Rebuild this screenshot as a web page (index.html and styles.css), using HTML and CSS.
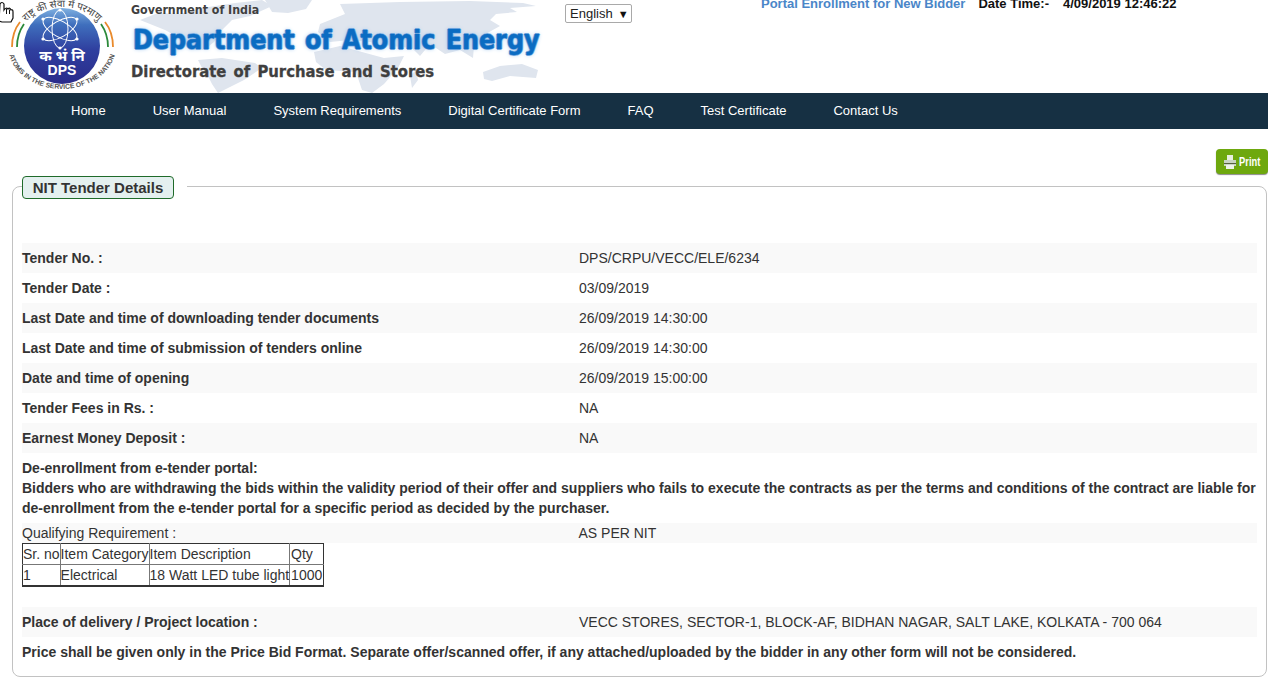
FILE: index.html
```html
<!DOCTYPE html>
<html lang="en">
<head>
<meta charset="utf-8">
<title>NIT Tender Details</title>
<link rel="stylesheet" href="styles.css">
</head>
<body>
<header class="masthead">
  <svg class="world" width="560" height="93" viewBox="0 0 560 93" aria-hidden="true">
    <g fill="#dfe5ee">
      <path d="M140 20 L158 13 L180 14 L202 8 L235 3 L262 0 L272 6 L250 16 L232 20 L222 30 L214 42 L204 50 L192 50 L180 38 L165 30 L150 24 Z"/>
      <path d="M265 0 L312 0 L306 9 L288 13 L272 12 Z"/>
      <path d="M198 60 L222 58 L255 63 L262 68 L244 80 L232 86 L218 93 L212 84 L208 76 L202 68 Z"/>
      <path d="M320 24 L345 14 L340 4 L400 2 L470 1 L523 3 L536 6 L510 8 L517 12 L496 14 L490 20 L500 26 L482 36 L474 46 L473 58 L460 50 L445 54 L430 44 L420 56 L412 48 L392 46 L370 42 L350 40 L330 42 L318 32 Z"/>
      <path d="M314 52 L340 46 L362 52 L384 58 L404 56 L398 68 L384 84 L372 93 L362 90 L356 72 L326 70 L316 62 Z"/>
      <path d="M483 72 L500 66 L522 64 L538 70 L536 78 L510 76 L492 81 L484 79 Z"/>
      <path d="M410 76 L416 70 L418 80 L412 88 Z"/>
    </g>
  </svg>
  <svg class="pointer" width="14" height="24" viewBox="0 0 14 24" aria-hidden="true">
    <path d="M-1 21 L0 4 Q2 1 4 4 L4 10 Q6 7 8 9 Q10 7 11 10 Q13 9 13 12 L13 18 L11 22 L2 22 Z" fill="#fff" stroke="#111" stroke-width="1.2"/>
    <path d="M6.500 9 V14 M9.500 9.500 V14" stroke="#111" stroke-width="1"/>
  </svg>
  <svg class="logo" width="124" height="93" viewBox="0 0 124 93" aria-hidden="true">
    <defs>
      <linearGradient id="disc" x1="0" y1="0" x2="0" y2="1">
        <stop offset="0" stop-color="#7fb0e0"/>
        <stop offset="0.22" stop-color="#3f6fbd"/>
        <stop offset="0.55" stop-color="#2f3f9f"/>
        <stop offset="1" stop-color="#2a2b8a"/>
      </linearGradient>
      <path id="arcTop" d="M16 46 A46 39 0 0 1 108 46"/>
      <path id="arcBottom" d="M8 46 A54 43 0 0 0 116 46"/>
    </defs>
    <circle cx="62" cy="46" r="38" fill="url(#disc)"/>
    <g fill="none" stroke="#fff" stroke-width="1">
      <ellipse cx="60" cy="29" rx="8" ry="19"/>
      <ellipse cx="60" cy="29" rx="8" ry="19" transform="rotate(60 60 29)"/>
      <ellipse cx="60" cy="29" rx="8" ry="19" transform="rotate(120 60 29)"/>
    </g>
    <g fill="#fff">
      <circle cx="60" cy="10" r="1.6"/><circle cx="43" cy="19" r="1.6"/><circle cx="77" cy="19" r="1.6"/>
      <circle cx="43" cy="39" r="1.6"/><circle cx="77" cy="39" r="1.6"/><circle cx="60" cy="48" r="1.6"/>
    </g>
    <text x="62" y="61" class="logo-hindi" text-anchor="middle">क भं नि</text>
    <text x="62" y="75" class="logo-dps" text-anchor="middle">DPS</text>
    <path d="M12 47 Q12 32 20 22" fill="none" stroke="#e98a2c" stroke-width="1.8"/>
    <path d="M17 47 Q17 34 24 24" fill="none" stroke="#2c8a3a" stroke-width="1.8"/>
    <path d="M113 47 Q113 32 105 22" fill="none" stroke="#e98a2c" stroke-width="1.8"/>
    <path d="M108 47 Q108 34 101 24" fill="none" stroke="#2c8a3a" stroke-width="1.8"/>
    <text class="logo-arc-top"><textPath href="#arcTop" startOffset="50%" text-anchor="middle">राष्ट्र की सेवा में परमाणु</textPath></text>
    <text class="logo-arc-bottom"><textPath href="#arcBottom" startOffset="50%" text-anchor="middle">ATOMS IN THE SERVICE OF THE NATION</textPath></text>
  </svg>
  <div class="brand">
    <div class="brand-gov">Government of India</div>
    <div class="brand-dept">Department of Atomic Energy</div>
    <div class="brand-dir">Directorate of Purchase and Stores</div>
  </div>
  <div class="lang"><span>English</span><span class="lang-arrow">▼</span></div>
  <div class="status">
    <a class="status-link" href="#">Portal Enrollment for New Bidder</a>
    <span class="status-label">Date Time:-</span>
    <span class="status-time">4/09/2019 12:46:22</span>
  </div>
</header>

<nav class="nav">
  <a href="#">Home</a>
  <a href="#">User Manual</a>
  <a href="#">System Requirements</a>
  <a href="#">Digital Certificate Form</a>
  <a href="#">FAQ</a>
  <a href="#">Test Certificate</a>
  <a href="#">Contact Us</a>
</nav>

<main class="content">
  <div class="toolbar">
    <button class="print" type="button">
      <svg width="12" height="16" viewBox="0 0 12 16" aria-hidden="true">
        <path d="M3 1 H9 V6 H3 Z" fill="#e8efe0"/>
        <path d="M0 6 H12 V12 H0 Z" fill="#c9d4c4"/>
        <path d="M0 9 H12 V10 H0 Z" fill="#55603f"/>
        <path d="M2 11 H10 V15 H2 Z" fill="#eef3ea"/>
      </svg>
      <span class="print-label">Print</span>
    </button>
  </div>
  <section class="panel">
    <div class="legend-row"><h2 class="legend">NIT Tender Details</h2><span class="legend-gap"></span></div>
    <div class="row shade"><b>Tender No. :</b><span>DPS/CRPU/VECC/ELE/6234</span></div>
    <div class="row"><b>Tender Date :</b><span>03/09/2019</span></div>
    <div class="row shade"><b>Last Date and time of downloading tender documents</b><span>26/09/2019 14:30:00</span></div>
    <div class="row"><b>Last Date and time of submission of tenders online</b><span>26/09/2019 14:30:00</span></div>
    <div class="row shade"><b>Date and time of opening</b><span>26/09/2019 15:00:00</span></div>
    <div class="row"><b>Tender Fees in Rs. :</b><span>NA</span></div>
    <div class="row shade"><b>Earnest Money Deposit :</b><span>NA</span></div>
    <p class="notice">De-enrollment from e-tender portal:<br>Bidders who are withdrawing the bids within the validity period of their offer and suppliers who fails to execute the contracts as per the terms and conditions of the contract are liable for de-enrollment from the e-tender portal for a specific period as decided by the purchaser.</p>
    <div class="row row-short shade"><span>Qualifying Requirement :</span><span>AS PER NIT</span></div>
    <table class="items">
      <tr><td>Sr. no</td><td>Item Category</td><td>Item Description</td><td>Qty</td></tr>
      <tr><td>1</td><td>Electrical</td><td>18 Watt LED tube light</td><td>1000</td></tr>
    </table>
    <div class="row shade"><b>Place of delivery / Project location :</b><span>VECC STORES, SECTOR-1, BLOCK-AF, BIDHAN NAGAR, SALT LAKE, KOLKATA - 700 064</span></div>
    <div class="row"><b>Price shall be given only in the Price Bid Format. Separate offer/scanned offer, if any attached/uploaded by the bidder in any other form will not be considered.</b></div>
  </section>
</main>
</body>
</html>
```

FILE: styles.css
```css
* { box-sizing: border-box; }
html, body { margin: 0; padding: 0; }
body {
  background: #fff;
  color: #333;
  font-family: "Liberation Sans", Arial, sans-serif;
  font-size: 14px;
  overflow: hidden;
}

.masthead {
  position: relative;
  display: flex;
  align-items: flex-start;
  height: 93px;
  overflow: hidden;
}
.world { position: absolute; left: 0; top: 0; }
.pointer { position: absolute; left: 0; top: 0; z-index: 1; }
.logo { position: relative; flex: none; }
.logo-hindi { font: 700 15px "Noto Sans", "DejaVu Sans", sans-serif; fill: #fff; }
.logo-dps { font: 700 14px "Liberation Sans", sans-serif; fill: #fff; }
.logo-arc-top { font: 400 10px "Noto Sans", "DejaVu Sans", sans-serif; fill: #444; }
.logo-arc-bottom { font: 700 6.8px "Liberation Sans", sans-serif; fill: #555; }

.brand {
  position: relative;
  flex: none;
  width: 434px;
  margin-left: 7px;
  font-family: "DejaVu Sans Condensed", "DejaVu Sans", sans-serif;
  font-stretch: condensed;
  font-weight: 700;
  color: #3f3f3f;
  white-space: nowrap;
}
.brand-gov { font-size: 12.300px; line-height: 14px; margin-top: 3px; }
.brand-dept {
  margin: 6px 0 0 2px;
  font-size: 26.500px;
  line-height: 33px;
  word-spacing: 2px;
  color: #0b6cc2;
  -webkit-text-stroke: 0.5px #0b6cc2;
  text-shadow: 1px 0 0 #8db9e8, -1px 0 0 #8db9e8, 0 1px 0 #8db9e8, 0 -1px 0 #8db9e8, 0 0 4px #9cc4ec;
}
.brand-dir {
  margin-top: 6px;
  font-size: 16.500px;
  line-height: 20px;
  word-spacing: 2px;
  -webkit-text-stroke: 0.3px #3f3f3f;
}

.lang {
  position: relative;
  flex: none;
  display: flex;
  align-items: center;
  gap: 5px;
  width: 67px;
  height: 19px;
  margin-top: 4px;
  padding-left: 4px;
  background: #fff;
  border: 1px solid #a9a9a9;
  border-radius: 2px;
  color: #222;
  font-size: 13px;
}
.lang-arrow { font-size: 11px; color: #111; }

.status {
  position: relative;
  flex: none;
  display: flex;
  gap: 13px;
  margin: -3px 0 0 129px;
  font-size: 13px;
  font-weight: 700;
  line-height: 14px;
  white-space: nowrap;
}
.status-link { color: #4a86c8; text-decoration: none; }
.status-label { color: #111; }
.status-time { color: #111; margin-left: 1px; }

.nav {
  display: flex;
  gap: 47px;
  height: 36px;
  padding-left: 71px;
  background: #163043;
}
.nav a { color: #fff; text-decoration: none; font-size: 13px; line-height: 36px; white-space: nowrap; }

.content { padding: 20px 0 0 12px; }
.toolbar { display: flex; justify-content: flex-end; height: 25px; }
.print {
  display: flex;
  align-items: center;
  gap: 3px;
  width: 52px;
  height: 25px;
  padding: 0 0 0 8px;
  background: #6ea80e;
  border: 0;
  border-radius: 4px;
  box-shadow: 0 1px 1px #8a8a8a;
  color: #fff;
  font-family: "Liberation Sans", sans-serif;
  font-size: 13px;
  font-weight: 700;
}
.print-label { display: inline-block; width: 22px; transform: scaleX(0.72); transform-origin: 0 50%; }

.panel {
  height: 491px;
  margin: 12px 1px 0 0;
  padding: 0 9px;
  border: 1px solid #c2c2c2;
  border-radius: 8px;
}
.legend-row { display: flex; align-items: center; height: 24px; margin: -12px 0 44px; }
.legend {
  margin: 0;
  width: 152px;
  height: 23px;
  background: #e4f0ef;
  border: 1px solid #1f6b2a;
  border-radius: 4px;
  color: #333;
  font-size: 15px;
  font-weight: 700;
  line-height: 21px;
  text-align: center;
}
.legend-gap { flex: none; width: 13px; align-self: stretch; background: #fff; }

.row {
  display: flex;
  align-items: center;
  height: 30px;
}
.row b { flex: none; width: 557px; color: #333; white-space: nowrap; }
.row > span:first-child { flex: none; width: 556.500px; }
.row.shade { background: #f9f9f9; }
.row.row-short { height: 20px; }
.row > b:only-child { width: auto; }

.notice {
  margin: 0;
  padding: 5px 0;
  font-weight: 700;
  line-height: 20px;
  color: #333;
}

.items {
  border-collapse: collapse;
  margin: 0 0 20px;
}
.items td {
  height: 21px;
  padding: 1px 0 0;
  border: 1px solid #777;
  line-height: 18px;
  vertical-align: top;
  white-space: nowrap;
}
.items td:nth-child(4) { padding-left: 1px; padding-right: 1px; }
.items tr:first-child td { border-top-color: #333; }
.items tr:last-child td { border-bottom: 2px solid #333; }
.items td:first-child { border-left-color: #333; }
.items td:last-child { border-right-color: #333; }
```
